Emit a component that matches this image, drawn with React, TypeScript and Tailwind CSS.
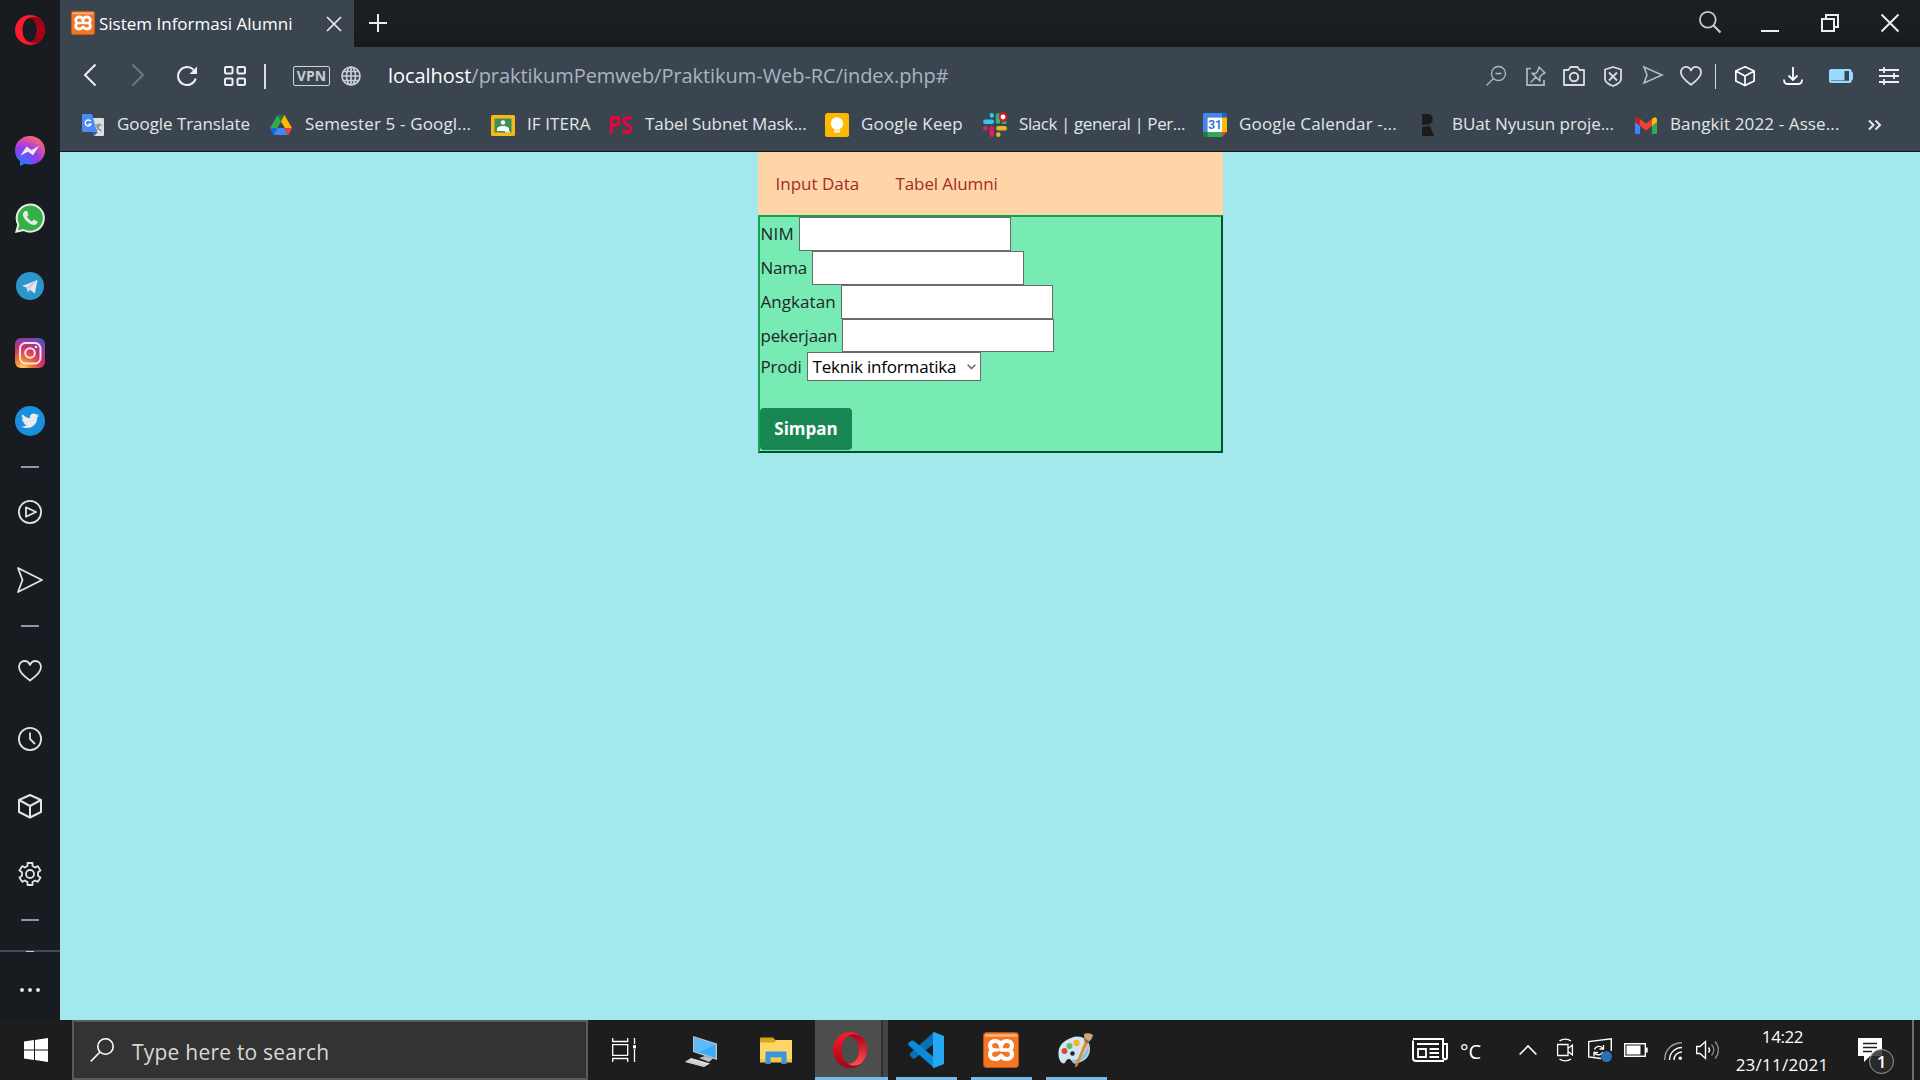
import type { ReactNode } from 'react';

type IconProps = { className?: string; box: string; children: ReactNode };

function Icon({ className = '', box, children }: IconProps) {
  return (
    <svg viewBox={box} className={`block shrink-0 overflow-visible ${className}`} fill="none" stroke="currentColor">
      {children}
    </svg>
  );
}

function XamppIcon({ className }: { className: string }) {
  return (
    <Icon box="0 0 36 36" className={className}>
      <rect x="0.5" y="0.5" width="35" height="35" rx="3" fill="#f37623" stroke="#b4541a" />
      <path d="M2 3.500h32" stroke="#f9b48c" strokeWidth="2.400" />
      <path
        d="M18 14.500C17.500 11 15.500 9 12.300 9 9 9 7 11 7 13.800c0 2 1 3.200 2.300 4.200C8 19 7 20.500 7 22.300 7 25.200 9 27 12.300 27c2.700 0 4.200-1.500 5.700-3.200 1.500 1.700 3 3.200 5.700 3.200 3.300 0 5.300-1.800 5.300-4.700 0-1.800-1-3.300-2.300-4.300 1.300-1 2.300-2.200 2.300-4.200C29 11 27 9 23.700 9c-3.200 0-5.200 2-5.700 5.500Z"
        stroke="#fff"
        strokeWidth="4.200"
        strokeLinejoin="round"
      />
      <path d="M9 18h5.500M27 18h-9M18 14v4" stroke="#fff" strokeWidth="3.600" strokeLinecap="round" />
    </Icon>
  );
}

function OperaIcon({ className }: { className: string }) {
  return (
    <Icon box="0 0 30 30" className={className}>
      <g stroke="none">
        <path fillRule="evenodd" fill="#ff1b2d" d="M15 0a15 15 0 1 0 0 30 15 15 0 0 0 0-30Zm0 3c4.200 0 7 5.400 7 12s-2.800 12-7 12-7.500-5.400-7.500-12S10.800 3 15 3Z" />
        <path fill="#a70014" d="M13 3.200C17 1 21 1.200 25 4c6.500 6 6.500 16 0 22-4 2.800-8 3-12 .8 6 .8 9.500-5 9.500-11.800S19 2.400 13 3.200Z" />
      </g>
    </Icon>
  );
}

function OperaTaskIcon() {
  return (
    <Icon box="0 0 34 36" className="h-9 w-[34px]">
      <defs>
        <linearGradient id="op" x1="0" y1="0" x2="0" y2="1">
          <stop offset="0" stopColor="#ff1b2d" />
          <stop offset="1" stopColor="#a70014" />
        </linearGradient>
        <linearGradient id="op2" x1="0" y1="0" x2="0" y2="1">
          <stop offset="0" stopColor="#b00016" />
          <stop offset="1" stopColor="#ff5050" />
        </linearGradient>
      </defs>
      <g stroke="none">
        <path fillRule="evenodd" fill="url(#op)" d="M17 0C7.600 0 0 8 0 18s7.600 18 17 18 17-8 17-18S26.400 0 17 0Zm0 4c5 0 9 6.300 9 14s-4 14-9 14-8.500-6.300-8.500-14S12 4 17 4Z" />
        <path fill="url(#op2)" d="M15 4.200C19 1.500 24 2 28 4.500 36 12 36 24 28 31.500c-4 2.500-9 3-13 .3 6 .5 11-5.500 11-13.800S21 3.700 15 4.200Z" />
      </g>
    </Icon>
  );
}

const HEART = 'M12 21.500C7 18 1 13.500 1 8c0-3.500 2.600-6 5.600-6C9 2 11 3.500 12 6c1-2.500 3-4 5.400-4C20.400 2 23 4.500 23 8c0 5.500-6 10-11 13.500Z';

function CubeIcon({ className }: { className: string }) {
  return (
    <Icon box="0 0 24 24" className={className}>
      <path d="M12 1 23 6v12l-11 5.500L1 18V6l11-5ZM1 6l11 6 11-6M12 12v11.500" strokeWidth="2" strokeLinejoin="round" />
    </Icon>
  );
}

function SideCell({ children }: { children: ReactNode }) {
  return <div className="flex h-[67.5px] w-full shrink-0 items-center justify-center">{children}</div>;
}

function SideDash() {
  return <div className="h-0.5 w-[18px] bg-[#8a98a8]" />;
}

function Sidebar() {
  return (
    <aside className="flex h-[1020px] w-[60px] shrink-0 flex-col items-center bg-[#181b20] text-[#e0e4e6]">
      <div className="flex h-[117px] w-full shrink-0 justify-center pt-[15px]">
        <OperaIcon className="size-[30px]" />
      </div>
      <SideCell>
        <Icon box="0 0 30 30" className="size-[30px]">
          <defs>
            <radialGradient id="ms" cx="0.2" cy="1" r="1.100">
              <stop offset="0" stopColor="#1486ff" />
              <stop offset="0.550" stopColor="#9a36f0" />
              <stop offset="1" stopColor="#ff6a6a" />
            </radialGradient>
          </defs>
          <path fill="url(#ms)" stroke="none" d="M15 0C6.500 0 0 6.300 0 14.500c0 4.300 1.800 8 5 10.600V30l4.800-2.300c1.600.5 3.400.8 5.200.8 8.500 0 15-6 15-14S23.500 0 15 0Z" />
          <path fill="#ececec" stroke="none" d="m5.500 19.500 6-9 5 3.400 7.500-3.900-6 9.200-5-3.500-7.500 3.800Z" />
        </Icon>
      </SideCell>
      <SideCell>
        <Icon box="0 0 30 30" className="size-[30px]">
          <path fill="#34b044" stroke="#e9e9e9" strokeWidth="2" d="m1.400 28.600 1.900-7A13.600 13.600 0 1 1 8.600 27l-7.200 1.600Z" />
          <path fill="#e9e9e9" stroke="none" d="M10 8c-3 2-2.500 5 0 8.300s6.500 6 9.500 5.700c2-.2 3.500-2 3-3.500l-3.600-2-1.900 1.900c-2.500-1-4-2.800-5-4.900l1.500-1.500L12.200 8H10Z" />
        </Icon>
      </SideCell>
      <SideCell>
        <Icon box="0 0 28 28" className="size-7">
          <circle cx="14" cy="14" r="14" fill="#2b95cc" stroke="none" />
          <path fill="#e6e8ea" stroke="none" d="m6 14 15.500-6-2.600 13.400-4.900-3.600-2.300 2.300L10.500 15.500 6 14Z" />
          <path stroke="#b4c4d0" d="m10.800 15.800 8-5.600-6.300 7v3" />
        </Icon>
      </SideCell>
      <SideCell>
        <Icon box="0 0 30 30" className="size-[30px]">
          <defs>
            <radialGradient id="ig" cx="0.250" cy="1" r="1.150">
              <stop offset="0" stopColor="#fdd35c" />
              <stop offset="0.300" stopColor="#f0702f" />
              <stop offset="0.600" stopColor="#cf2c70" />
              <stop offset="1" stopColor="#5450cc" />
            </radialGradient>
          </defs>
          <rect width="30" height="30" rx="6" fill="url(#ig)" stroke="none" />
          <g stroke="#f0e8ea" strokeWidth="2">
            <rect x="5" y="5" width="20.500" height="20.500" rx="5.500" />
            <circle cx="15" cy="15" r="4.800" />
          </g>
          <circle cx="21" cy="9" r="1.300" fill="#f0e8ea" stroke="none" />
        </Icon>
      </SideCell>
      <SideCell>
        <Icon box="0 0 30 30" className="size-[30px]">
          <circle cx="15" cy="15" r="15" fill="#1b8fde" stroke="none" />
          <path fill="#e8ecee" stroke="none" transform="translate(6.300 6) scale(.74)" d="M23.950 4.570a10 10 0 0 1-2.820.77 4.960 4.960 0 0 0 2.160-2.720 9.900 9.900 0 0 1-3.120 1.180 4.920 4.920 0 0 0-8.380 4.480C7.690 8.090 4.070 6.130 1.640 3.160a4.920 4.920 0 0 0 1.520 6.570 4.900 4.900 0 0 1-2.230-.61v.06a4.920 4.920 0 0 0 3.950 4.830 5 5 0 0 1-2.210.08 4.940 4.940 0 0 0 4.600 3.420A9.870 9.870 0 0 1 0 19.540a13.990 13.990 0 0 0 7.550 2.210c9.050 0 14-7.500 14-13.980 0-.21 0-.42-.02-.63a9.940 9.940 0 0 0 2.460-2.550Z" />
        </Icon>
      </SideCell>
      <div className="flex h-6 shrink-0 items-center pt-[1px]">
        <SideDash />
      </div>
      <SideCell>
        <Icon box="0 0 24 24" className="size-6">
          <circle cx="12" cy="12" r="11.100" strokeWidth="1.800" />
          <path d="M8 7.300 18 12 8 16.700V7.300Z" strokeWidth="1.800" strokeLinejoin="round" />
        </Icon>
      </SideCell>
      <SideCell>
        <Icon box="0 0 26 26" className="size-[26px]">
          <path d="M1 1 25 13 1 25l4.500-12L1 1Z" strokeWidth="1.800" strokeLinejoin="round" />
        </Icon>
      </SideCell>
      <div className="flex h-6 shrink-0 items-center pt-[1px]">
        <SideDash />
      </div>
      <SideCell>
        <Icon box="0 0 24 24" className="size-6">
          <path d={HEART} strokeWidth="1.800" strokeLinejoin="round" />
        </Icon>
      </SideCell>
      <SideCell>
        <Icon box="0 0 24 24" className="size-6">
          <circle cx="12" cy="12" r="11.100" strokeWidth="1.800" />
          <path d="M12 5.500V12l5 5" strokeWidth="1.800" />
        </Icon>
      </SideCell>
      <SideCell>
        <CubeIcon className="size-6" />
      </SideCell>
      <SideCell>
        <Icon box="0 0 24 24" className="size-6">
          <path
            d="M9.500 1h5v3l2.600 1.500 2.700-1.400 2.700 4.400L20 10.200v3.600l2.500 1.700-2.700 4.400-2.700-1.400-2.600 1.500v3h-5v-3l-2.600-1.500-2.700 1.400-2.700-4.400L4 13.800v-3.600L1.500 8.500l2.700-4.400 2.700 1.400L9.500 4V1Z"
            strokeWidth="1.800"
            strokeLinejoin="round"
          />
          <circle cx="12" cy="12" r="4" strokeWidth="1.800" />
        </Icon>
      </SideCell>
      <div className="flex h-6 shrink-0 items-center">
        <SideDash />
      </div>
      <div className="mt-auto flex h-[70px] w-full flex-col items-center border-t-2 border-[#3f4a54]">
        <div className="-mt-[1px] h-[1px] w-2 bg-[#c8ccd0]" />
        <div className="mt-9 flex gap-1">
          <i className="size-1 rounded-full bg-[#e0e4e6]" />
          <i className="size-1 rounded-full bg-[#e0e4e6]" />
          <i className="size-1 rounded-full bg-[#e0e4e6]" />
        </div>
      </div>
    </aside>
  );
}

function TabBar() {
  return (
    <div className="flex h-[47px] shrink-0 bg-gradient-to-b from-[#1a1e22] via-[#1c1f22] to-[#17191d] text-[#ececec]">
      <div className="flex w-[294px] items-center bg-[#3a4550] pl-[11px]">
        <XamppIcon className="-mt-[1px] size-6" />
        <span className="ml-1 w-[227px] text-[17px] text-white">Sistem Informasi Alumni</span>
        <Icon box="0 0 16 16" className="size-4">
          <path d="m1 1 14 14M15 1 1 15" strokeWidth="1.700" />
        </Icon>
      </div>
      <Icon box="0 0 18 18" className="mt-[14px] ml-[15px] size-[18px]">
        <path d="M0 9h18M9 0v18" strokeWidth="2" />
      </Icon>
      <div className="ml-auto flex pr-[21px]">
        <Icon box="0 0 22 22" className="mt-[11px] size-[22px] text-[#c8cacc]">
          <circle cx="8.800" cy="8.800" r="7.900" strokeWidth="1.800" />
          <path d="m14.500 14.500 7 7" strokeWidth="2.200" />
        </Icon>
        <div className="mt-[30px] ml-10 h-0.5 w-[18px] bg-[#ececec]" />
        <Icon box="0 0 18 18" className="mt-[14px] ml-[42px] size-[18px]">
          <path d="M1 5h12v12H1zM5 5V1h12v12h-4" strokeWidth="2" />
        </Icon>
        <Icon box="0 0 18 18" className="mt-[14px] ml-[42px] size-[18px]">
          <path d="m.500.500 17 17M17.500.500l-17 17" strokeWidth="2" />
        </Icon>
      </div>
    </div>
  );
}

function AddressBar() {
  return (
    <div className="flex h-[58px] shrink-0 items-center pr-[21px] pl-6 text-[#d9dde0]">
      <Icon box="0 0 12 22" className="h-[22px] w-3 -translate-y-[1px] text-[#eef0f1]">
        <path d="M11.500.500 1 11l10.500 10.500" strokeWidth="2" />
      </Icon>
      <Icon box="0 0 12 22" className="ml-9 h-[22px] w-3 -translate-y-[1px] text-[#6d7780]">
        <path d="M.500.500 11 11 .500 21.500" strokeWidth="2" />
      </Icon>
      <Icon box="0 0 20 20" className="ml-[33px] size-5 text-[#eef0f1]">
        <path d="M18.700 12.500A9 9 0 1 1 16.500 3.800" strokeWidth="2" />
        <path d="M20 .5V8h-7.500L20 .5Z" fill="currentColor" stroke="none" />
      </Icon>
      <Icon box="0 0 22 20" className="ml-[27px] h-5 w-[22px] text-[#eef0f1]">
        <g strokeWidth="2">
          <rect x="1" y="1" width="7.500" height="6.500" rx="1" />
          <rect x="13.500" y="1" width="7.500" height="6.500" rx="1" />
          <rect x="1" y="12.500" width="7.500" height="6.500" rx="1" />
          <rect x="13.500" y="12.500" width="7.500" height="6.500" rx="1" />
        </g>
      </Icon>
      <div className="ml-[18px] h-[25px] w-0.5 bg-[#d9dde0]" />
      <div className="ml-[27px] flex h-5 w-[37px] items-center justify-center rounded-[2px] border border-[#d0d4d8] text-[14px] leading-none font-bold text-[#c9ced2]">
        VPN
      </div>
      <Icon box="0 0 20 20" className="ml-[11px] size-5 text-[#c9ced2]">
        <g strokeWidth="1.700">
          <circle cx="10" cy="10" r="9" />
          <ellipse cx="10" cy="10" rx="4.500" ry="9" />
          <path d="M10 1v18M1 10h18M2.500 5.500h15M2.500 14.500h15" />
        </g>
      </Icon>
      <div className="ml-[27px] text-xl tracking-[-0.050px] text-[#a9b4c0]">
        <span className="text-white">localhost</span>/praktikumPemweb/Praktikum-Web-RC/index.php#
      </div>
      <div className="ml-auto flex items-center">
        <Icon box="0 0 20 20" className="size-5 text-[#b3babf]">
          <circle cx="12.500" cy="7.500" r="7" strokeWidth="1.300" />
          <path d="M9.500 7.500h6M7.500 12.500.5 19.500" strokeWidth="1.300" />
        </Icon>
        <Icon box="0 0 20 20" className="ml-5 size-5 text-[#b3babf]">
          <path d="M5 2.500H1v16.700h17V14" strokeWidth="1.700" />
          <path d="m13 1 6 6-2 .8-3.300 3.200.3 4L6 7.200l4 .2L12.300 4 13 1ZM10 11l-5.500 5.500" strokeWidth="1.500" strokeLinejoin="round" />
        </Icon>
        <Icon box="0 0 22 20" className="ml-[17px] h-5 w-[22px]">
          <path d="M1 4h4.500L7.500 1h7l2 3H21v15H1V4Z" strokeWidth="1.800" strokeLinejoin="round" />
          <circle cx="11" cy="11" r="4.200" strokeWidth="2" />
        </Icon>
        <Icon box="0 0 18 21" className="ml-[19px] h-[21px] w-[18px]">
          <path d="m9 1 8 2.500V13c0 3.500-4 5.500-8 7-4-1.500-8-3.500-8-7V3.500L9 1Z" strokeWidth="1.800" strokeLinejoin="round" />
          <path d="m5 6.500 8 8M13 6.500l-8 8" strokeWidth="1.800" />
        </Icon>
        <Icon box="0 0 20 18" className="ml-[21px] h-[18px] w-5 -translate-y-[1px] text-[#b3babf]">
          <path d="m1 1 18 8L1 17l3-8-3-8Z" strokeWidth="1.600" />
        </Icon>
        <Icon box="0 0 24 24" className="ml-[17px] size-[22px]">
          <path d={HEART} strokeWidth="2" strokeLinejoin="round" />
        </Icon>
        <div className="ml-[13px] h-[25px] w-[1px] bg-[#d9dde0]" />
        <CubeIcon className="ml-[19px] size-5 text-white" />
        <Icon box="0 0 20 18" className="ml-7 h-[18px] w-5 text-white">
          <path d="M10 0v13M5.500 8.500 10 13l4.500-4.500M1 12.500c0 3.500 1 4.500 3.500 4.500h11c2.500 0 3.500-1 3.500-4.500" strokeWidth="1.800" />
        </Icon>
        <Icon box="0 0 24 14" className="ml-[26px] h-3.5 w-6">
          <path d="M2.500 0h18c1.500 0 2 .8 2.200 2.500L24 4v6l-1.300 1.500c-.2 1.700-.7 2.500-2.200 2.500h-18C.8 14 0 13.200 0 11.500v-9C0 .8.800 0 2.500 0Z" fill="#99dbff" stroke="none" />
          <path d="M15.500 2H20v9.800H2v-.600h13.500V2Z" fill="#3a4550" stroke="none" />
        </Icon>
        <Icon box="0 0 20 18" className="ml-[26px] h-[18px] w-5 text-[#eef0f1]">
          <path d="M0 3h20M0 9h20M0 15h20M5 0v6M15 6v6M5 12v6" strokeWidth="1.800" />
        </Icon>
      </div>
    </div>
  );
}

function Bookmark({ width, icon, children }: { width: string; icon: ReactNode; children: ReactNode }) {
  return (
    <div className={`flex shrink-0 items-center ${width}`}>
      <div className="flex size-6 items-center justify-center">{icon}</div>
      <span className="ml-3 -translate-y-[1px] whitespace-nowrap">{children}</span>
    </div>
  );
}

function BookmarksBar() {
  return (
    <div className="flex h-[47px] shrink-0 border-b border-[#14171a] pb-1.5 pl-[21px] text-[17px] text-[#e3e6e8]">
      <Bookmark
        width="w-[188px]"
        icon={
          <Icon box="0 0 22 22" className="size-[22px]">
            <g stroke="none">
              <path d="M8 4h13a1 1 0 0 1 1 1v16a1 1 0 0 1-1 1h-9L8 4Z" fill="#dcdfe0" />
              <path d="M11 18h5l-4 4-1-4Z" fill="#4352b8" />
              <path d="M1.200 0H10l5 18H1.200C.5 18 0 17.500 0 16.800V1.200C0 .5.5 0 1.200 0Z" fill="#4c8bf5" />
            </g>
            <path d="M8.700 7.200A3 3 0 1 0 9 10.200H6.500" stroke="#fff" strokeWidth="1.400" />
            <path d="M13.500 11H20M17 9.500V11c-.5 3-2 4.500-3 5.500M14.500 12c1 2.500 3 4 5 5" stroke="#6d7f86" strokeWidth="1.100" />
          </Icon>
        }
      >
        <span className="tracking-[-0.060px]">Google Translate</span>
      </Bookmark>
      <Bookmark
        width="w-[222px]"
        icon={
          <Icon box="0 0 22 20" className="h-5 w-[22px]">
            <g stroke="none">
              <path d="M7.500 0 11 6.500 4 20 0 13 7.500 0Z" fill="#34a853" />
              <path d="M7.500 0h7L11 6.500 7.500 0Z" fill="#188038" />
              <path d="M14.500 0 22 13h-7L11 6.500 14.500 0Z" fill="#ffba00" />
              <path d="M0 13h7.500L4 20c-.7-.3-1.200-.8-1.500-1.500L0 13Z" fill="#1967d2" />
              <path d="M7.500 13h7l3.500 7H4l3.500-7Z" fill="#4285f4" />
              <path d="M14.500 13H22l-3 6-1 1-3.500-7Z" fill="#ea4335" />
            </g>
          </Icon>
        }
      >
        <span className="tracking-[0.150px]">Semester 5 - Googl...</span>
      </Bookmark>
      <Bookmark
        width="w-[118px]"
        icon={
          <Icon box="0 0 24 21" className="h-[21px] w-6">
            <g stroke="none">
              <rect width="24" height="21" rx="1.500" fill="#f5ba15" />
              <rect x="3.500" y="3.500" width="17" height="14" fill="#3e8f56" />
              <circle cx="12" cy="7.500" r="2.200" fill="#fff" />
              <path d="M6 16v-2c0-2 3-3 6-3s6 1 6 3v2H6Z" fill="#fff" />
              <path d="M14 17.500h5v-1.500h-5z" fill="#e8e8e8" />
            </g>
          </Icon>
        }
      >
        <span className="tracking-[0.100px]">IF ITERA</span>
      </Bookmark>
      <Bookmark
        width="w-[216px]"
        icon={
          <Icon box="0 0 22 18" className="h-[18px] w-[22px] text-[#f2003c]">
            <path d="M1.500 18V1.500H6c4 0 4 7.500 0 7.500H2M21 3.500C20 .8 13.800.8 13.800 5c0 4.500 7 3 7 7.500 0 4.500-7 4.500-8 1.500" strokeWidth="2.800" />
          </Icon>
        }
      >
        <span className="tracking-[-0.080px]">Tabel Subnet Mask...</span>
      </Bookmark>
      <Bookmark
        width="w-[158px]"
        icon={
          <Icon box="0 0 24 24" className="size-6">
            <g stroke="none">
              <rect width="24" height="24" rx="2.500" fill="#fdb900" />
              <circle cx="12" cy="10.500" r="6.200" fill="#fff" />
              <path d="M9 14h6v2.500H9zM9 17.500h6v2H9z" fill="#fff" />
            </g>
          </Icon>
        }
      >
        <span className="tracking-[0.150px]">Google Keep</span>
      </Bookmark>
      <Bookmark
        width="w-[220px]"
        icon={
          <Icon box="0 0 24 24" className="size-6">
            <g strokeWidth="4.400" strokeLinecap="round">
              <path d="M2.300 8.800h6.500M8.800 2.300v.2" stroke="#36c5f0" />
              <path d="M15 8.800V2.500" stroke="#2eb67d" />
              <path d="M15.300 15.200h6.500M15.300 21.500v.2" stroke="#ecb22e" />
              <path d="M8.800 15.200v6.500M2.300 15.200h.2" stroke="#e01e5a" />
            </g>
            <path d="M19 9.500c2 1 4 .5 4-1" stroke="#2eb67d" strokeWidth="2" />
            <circle cx="20" cy="4" r="3.400" stroke="#e8141c" strokeWidth="2" fill="#fff" />
          </Icon>
        }
      >
        <span className="tracking-[-0.420px]">Slack | general | Per...</span>
      </Bookmark>
      <Bookmark
        width="w-[213px]"
        icon={
          <div className="relative">
            <Icon box="0 0 24 24" className="size-6">
              <g stroke="none">
                <path d="M0 1a1 1 0 0 1 1-1h18v4.500H4.500V24H1a1 1 0 0 1-1-1V1Z" fill="#4285f4" />
                <path d="M19 0h4a1 1 0 0 1 1 1v3.500h-5V0Z" fill="#1967d2" />
                <path d="M19 4.500h5V19h-5z" fill="#fbbc04" />
                <path d="M4.500 19H19v5H4.500z" fill="#34a853" />
                <path d="M0 19h4.500v5H1a1 1 0 0 1-1-1v-4Z" fill="#188038" />
                <path d="M19 19h5l-5 5v-5Z" fill="#ea4335" />
                <path d="M4.500 4.500H19V19H4.500z" fill="#fff" />
              </g>
            </Icon>
            <span className="absolute inset-0 flex items-center justify-center font-[Roboto] text-[12px] font-semibold text-[#2a6fdd]">31</span>
          </div>
        }
      >
        <span className="tracking-[0.150px]">Google Calendar -...</span>
      </Bookmark>
      <Bookmark
        width="w-[218px]"
        icon={
          <Icon box="0 0 12 24" className="h-6 w-3">
            <path d="M0 1h6c6 0 6.500 9 1 10.500L0 12V1ZM0 14l8-1 4 10H0v-9Z" fill="#1c1c1e" stroke="none" />
          </Icon>
        }
      >
        <span className="tracking-[-0.070px]">BUat Nyusun proje...</span>
      </Bookmark>
      <Bookmark
        width="w-[234px]"
        icon={
          <Icon box="0 0 22 17" className="h-[17px] w-[22px]">
            <g stroke="none">
              <path d="M0 5l5 3.500V17H1.500A1.500 1.500 0 0 1 0 15.500V5Z" fill="#4285f4" />
              <path d="M22 5l-5 3.500V17h3.500a1.500 1.500 0 0 0 1.500-1.500V5Z" fill="#34a853" />
              <path d="M17 2l2-1.500c1.500-1 3 .5 3 2V5l-5 4V2Z" fill="#fbbc04" />
              <path d="M5 2l6 4.500L17 2v7l-6 4.500L5 9V2Z" fill="#ea4335" />
              <path d="M5 2 3 .5C1.500-.5 0 1 0 2.500V5l5 4V2Z" fill="#c5221f" />
            </g>
          </Icon>
        }
      >
        <span className="tracking-[0.120px]">Bangkit 2022 - Asse...</span>
      </Bookmark>
      <div className="flex items-center">
        <Icon box="0 0 13 10" className="h-2.5 w-[13px]">
          <path d="m1 .5 4.500 4.500L1 9.500M7.500.5 12 5 7.500 9.500" strokeWidth="2" />
        </Icon>
      </div>
    </div>
  );
}

function Field({ label, width, tracking, height }: { label: string; width: string; tracking: string; height: string }) {
  return (
    <div className={`flex items-center ${height}`}>
      <label className={`shrink-0 pl-[1px] whitespace-nowrap ${width} ${tracking}`}>{label}</label>
      <input className="h-full w-[212px] border border-[#6b6b6b] bg-white" />
    </div>
  );
}

function Page() {
  return (
    <main className="flex flex-1 justify-center bg-[#a2e8ec]">
      <div className="w-[465px] text-[17px] leading-[26px]">
        <nav className="flex h-[63px] items-center bg-[#fdd5a7] pl-[18px] text-[#a52a2a]">
          <a className="w-[120px]">Input Data</a>
          <a className="tracking-[-0.100px]">Tabel Alumni</a>
        </nav>
        <form className="h-[238px] border-2 border-t-[#12a550] border-r-[#04522a] border-b-[#04522a] border-l-[#12a550] bg-[#78ebb4] text-[#212529]">
          <Field label="NIM" width="w-[39px]" tracking="tracking-[0.200px]" height="h-[34px]" />
          <Field label="Nama" width="w-[52px]" tracking="tracking-[-0.250px]" height="h-[34px]" />
          <Field label="Angkatan" width="w-[81px]" tracking="tracking-[0.050px]" height="h-[34px]" />
          <Field label="pekerjaan" width="w-[82px]" tracking="tracking-[-0.250px]" height="h-[33px]" />
          <div className="flex h-[29px] items-center">
            <label className="w-[47px] shrink-0 pl-[1px] tracking-[-0.200px]">Prodi</label>
            <div className="flex h-full w-[174px] items-center border border-[#6b6b6b] bg-white pl-[5px] text-black">
              <span className="w-[154px] tracking-[-0.200px] whitespace-nowrap">Teknik informatika</span>
              <Icon box="0 0 9 6" className="h-1.5 w-[9px] text-[#6b6b6b]">
                <path d="m.7.7 3.800 3.800L8.300.7" strokeWidth="1.600" />
              </Icon>
            </div>
          </div>
          <button type="button" className="mt-[27px] block h-[42px] w-[92px] rounded-[4px] bg-[#198754] pl-[1px] font-bold text-white">
            Simpan
          </button>
        </form>
      </div>
    </main>
  );
}

function Taskbar() {
  return (
    <footer className="flex h-[60px] bg-[#1d1d1d] text-white">
      <div className="flex w-[72px] items-center justify-center">
        <Icon box="0 0 24 24" className="size-6">
          <path d="M0 3.500 10 2v9.500H0v-8ZM11 1.900 24 0v11.500H11V1.900ZM0 12.500h10V22L0 20.500v-8ZM11 12.500h13V24l-13-1.900v-9.600Z" fill="#fff" stroke="none" />
        </Icon>
      </div>
      <div className="flex w-[516px] items-center border-2 border-[#5a5a5a] bg-[#333] pl-4">
        <Icon box="0 0 24 24" className="size-6">
          <circle cx="15.500" cy="8.500" r="7.700" strokeWidth="1.600" />
          <path d="M10 14 .7 23.500" strokeWidth="1.700" />
        </Icon>
        <span className="mt-1.5 ml-[18px] text-[21px] tracking-[0.220px] text-[#d8d8d8]">Type here to search</span>
      </div>
      <div className="flex flex-1 items-center">
        <Icon box="0 0 24 24" className="ml-6 size-6">
          <path d="M.7 0v3.500h15V0M.7 6.700h15v10.600h-15zM.7 24v-3.500h15V24M22.500 0v6M22.500 11v13" strokeWidth="1.300" />
          <path d="M21 7.200h3v3.200h-3z" fill="#fff" stroke="none" />
        </Icon>
        <Icon box="0 0 32 31" className="mt-0.5 ml-[49px] h-[31px] w-8">
          <g stroke="none">
            <path d="M8 0 32 7.500V24L8 16V0Z" fill="#b9c4cc" />
            <path d="M9.300 1.800 30.500 8.300v13.800L9.300 15V1.800Z" fill="#3aabf8" />
            <path d="M9.300 1.800 30.500 8.300 14 16.500 9.300 15V1.800Z" fill="#5cbcfb" />
            <path d="m14 22 6-2 8 2.500-4 3.500-10-4Z" fill="#b8c2c6" />
            <path d="m0 26 6-4 19 5.500-6 3.500L0 26Z" fill="#dfe3e6" />
            <path d="m5 24 17 5M3 25.500 20 30" stroke="#9ca4aa" strokeWidth=".7" strokeDasharray="2 1" />
          </g>
        </Icon>
        <Icon box="0 0 32 27" className="ml-[43px] h-[27px] w-8">
          <g stroke="none">
            <path d="M0 1.500A1 1 0 0 1 1 .5h12L15.500 3H31a1 1 0 0 1 1 1v5H0V1.500Z" fill="#dfa016" />
            <path d="M0 5.500h14L16.500 3H32v22H0V5.500Z" fill="#fdd667" />
            <path d="M0 22h32v3.500H0z" fill="#f5c443" />
            <path d="M5.500 27V15.500a1 1 0 0 1 1-1h19a1 1 0 0 1 1 1V27h-5v-6.500h-11V27h-5Z" fill="#3c94dc" />
          </g>
        </Icon>
        <div className="ml-[23px] flex h-full w-[73px] border-b-3 border-[#76b9ed]">
          <div className="flex w-[66px] items-center justify-center bg-[#4d4d4d] pt-[2px] pl-1">
            <OperaTaskIcon />
          </div>
          <div className="w-0.5 bg-[#2f2f2f]" />
          <div className="w-[5px] bg-[#444]" />
        </div>
        <div className="ml-2 flex h-full w-[61px] items-center justify-center border-b-3 border-[#76b9ed] pt-[3px] pr-0.5">
          <Icon box="0 0 36 36" className="size-9">
            <g stroke="none">
              <path d="M26 0 2.500 21c-1 1-1 2 0 3L4 26c1 1 2 1 3 .3L27 11V0h-1Z" fill="#0a6fb5" />
              <path d="M26 36 .8 13.500c-1-1-1-2 0-3L3 9c1-.8 2-.7 3 0l21 17v10h-1Z" fill="#0d8ad6" />
              <path d="M26 0 36 4v28l-10 4c-.8-.3-1-1-1-2V2c0-1 .2-1.700 1-2Z" fill="#25a8f3" />
            </g>
          </Icon>
        </div>
        <div className="ml-3.5 flex h-full w-[61px] items-center justify-center border-b-3 border-[#76b9ed] pt-[3px] pr-[1px]">
          <XamppIcon className="size-9" />
        </div>
        <div className="ml-3.5 flex h-full w-[61px] items-center justify-center border-b-3 border-[#76b9ed] pt-[3px] pr-[3px]">
          <Icon box="0 0 34 36" className="h-9 w-[34px]">
            <g stroke="none">
              <path d="M13 6C22 2 32 7 32 17c0 9-8 14-15 14.500-3 .2-2.500-4-6-4.500-3.500-.4-3 5-5.500 4.500C2 31 0 25 .5 20 1 13 6 8.500 13 6Z" fill="#cfe6f5" />
              <path d="M30 12c4 9-4 18-13 19.500-2 .3-2-2-3.500-3.500C22 28 28 22 30 12Z" fill="#8fbfe0" />
              <circle cx="6.500" cy="19" r="2.900" fill="#e0443c" />
              <circle cx="11.500" cy="14" r="3" fill="#5fc05a" />
              <circle cx="18.500" cy="11" r="3.200" fill="#f8b32c" />
              <circle cx="14.500" cy="21.500" r="2.200" fill="#1d2730" />
              <path d="M27 9 30 11 19 34.500l-2 .5.300-2L27 9Z" fill="#e98a2b" />
              <path d="M26 2c3-1.500 6-1 9 1-.5 3-2 5-5 7.500L26.500 8 26 2Z" fill="#cfa878" />
              <path d="m26 6 5 3-1 2.500-3.500-2L26 6Z" fill="#8a6b4c" />
            </g>
          </Icon>
        </div>
        <div className="ml-auto flex h-full items-center">
          <Icon box="0 0 36 24" className="h-6 w-9">
            <path d="M2.500 1H31v18c0 3 4 3 4 0V6h-3.500M1 2.500V20c0 2 1 3 3 3h28" strokeWidth="2" />
            <path d="M1 1h30v19M5 6h22M17.500 11H27M17.500 15H27M17.500 19H27M6 11h8v8H6z" strokeWidth="1.800" />
          </Icon>
          <span className="mt-1 ml-3 w-5 text-xl leading-none">°C</span>
          <Icon box="0 0 18 10" className="ml-[39px] h-2.5 w-[18px]">
            <path d="M.6 9.500 9 1l8.400 8.500" strokeWidth="1.600" />
          </Icon>
          <Icon box="0 0 16 24" className="ml-5 h-6 w-4">
            <path d="M.6 6.500H11v11H.6zM11 10.500l4.400-3.500v10L11 13.500M2.500 3c3-2.500 8.500-2.500 11.500 0M2.500 21c3 2.500 8.500 2.500 11.500 0" strokeWidth="1.300" />
          </Icon>
          <Icon box="0 0 24 24" className="ml-[15px] size-6">
            <path d="M13 20.500.7 19V3.500L23.300.7V13" strokeWidth="1.400" />
            <path d="M6.500 11.500C7.500 8 13 7 15 10.500M15.500 7v4h-4M15 14c-1 3-6 4-8.500 1M6 18.500v-4h4" strokeWidth="1.300" />
            <circle cx="18.500" cy="18.500" r="5.500" fill="#2a70b8" stroke="none" />
          </Icon>
          <Icon box="0 0 24 14" className="ml-3 h-3.5 w-6">
            <path d="M.7.7h20.600v12.600H.7z" strokeWidth="1.400" />
            <path d="M2.500 2.500h14v9h-14zM22 4.500h1.700v5H22z" fill="#fff" stroke="none" />
          </Icon>
          <Icon box="0 0 18 18" className="mt-0.5 ml-4 size-[18px]">
            <g strokeWidth="1.400">
              <path d="M.7 18C.7 8 8 .7 18 .7" stroke="#9a9a9a" />
              <path d="M5.500 18c0-7 5.500-12.500 12.500-12.500M10 18c0-4.500 3.500-8 8-8" />
            </g>
            <circle cx="16.300" cy="16.300" r="1.700" fill="#fff" stroke="none" />
          </Icon>
          <Icon box="0 0 23 20" className="ml-[14px] h-5 w-[23px]">
            <path d="M.7 6.500H4L9.500 1.500v17L4 13.500H.7v-7ZM12.500 7.500c1.300 1.500 1.300 3.500 0 5" strokeWidth="1.400" />
            <path d="M15.500 4.500c3 3.500 3 7.500 0 11M19 1.500c4.500 5 4.500 12 0 17" stroke="#8a8a8a" strokeWidth="1.300" />
          </Icon>
          <div className="mt-[1px] ml-[15px] flex w-[96px] flex-col items-center text-[17px] leading-[28px] tracking-[0.250px]">
            <span className="pl-[1px] tracking-[-0.400px]">14:22</span>
            <span>23/11/2021</span>
          </div>
          <div className="relative ml-7 size-6">
            <Icon box="0 0 24 24" className="size-6">
              <path d="M0 0h24v18H12l-6 6v-6H0V0Z" fill="#fff" stroke="none" />
              <path d="M5 5.500h14M5 9.500h14M5 13.500h9" stroke="#1d1d1d" strokeWidth="1.300" />
            </Icon>
            <span className="absolute top-[11px] left-[11px] flex size-[25px] items-center justify-center rounded-full border border-[#9a9a9a] bg-[#2b2b2b]/85 text-[17px] font-semibold">
              1
            </span>
          </div>
          <div className="ml-[30px] h-full w-0.5 bg-[#6e6e6e]" />
          <div className="w-1.5" />
        </div>
      </div>
    </footer>
  );
}

export default function App() {
  return (
    <div className="flex h-[1080px] w-[1920px] flex-col overflow-hidden font-['Open_Sans',sans-serif]">
      <div className="flex h-[1020px]">
        <Sidebar />
        <div className="flex flex-1 flex-col bg-[#3a4550]">
          <TabBar />
          <AddressBar />
          <BookmarksBar />
          <Page />
        </div>
      </div>
      <Taskbar />
    </div>
  );
}
